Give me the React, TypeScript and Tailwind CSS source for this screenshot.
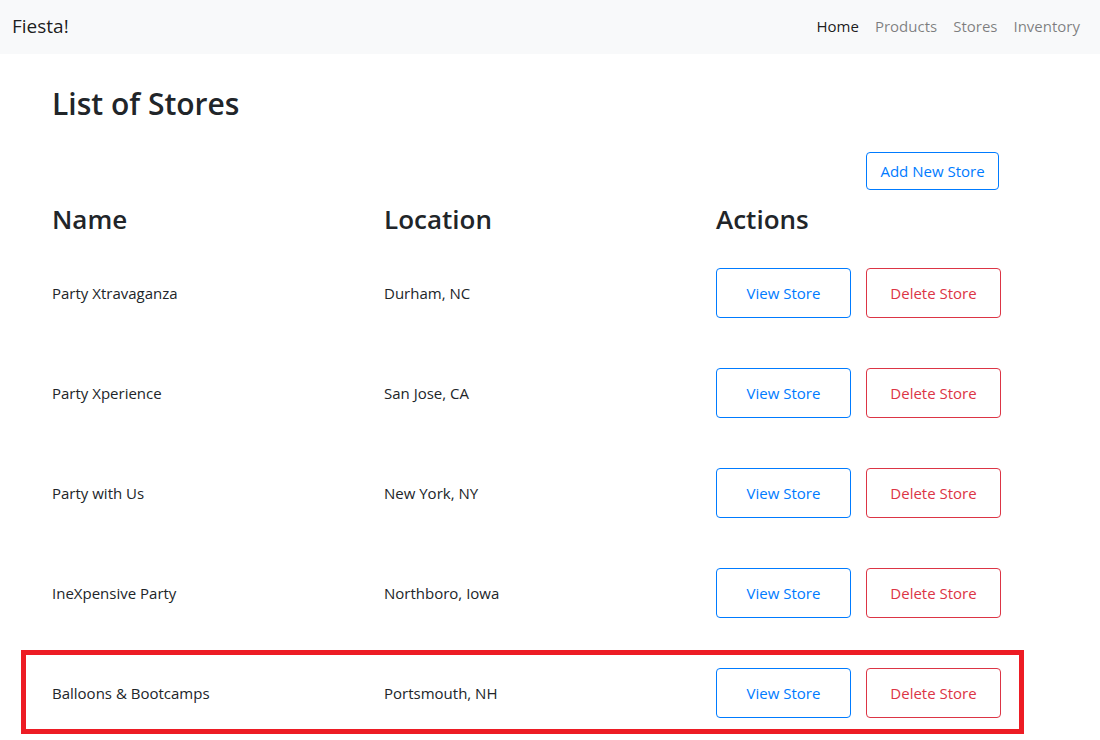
import React from "react";

const stores = [
  { name: "Party Xtravaganza", loc: "Durham, NC" },
  { name: "Party Xperience", loc: "San Jose, CA" },
  { name: "Party with Us", loc: "New York, NY" },
  { name: "IneXpensive Party", loc: "Northboro, Iowa" },
  { name: "Balloons & Bootcamps", loc: "Portsmouth, NH" },
];

export default function App() {
  return (
    <div className="min-h-[740px] bg-white text-[#212529] font-['Open_Sans',sans-serif]">
      <nav className="h-[54px] bg-[#f8f9fa] flex items-center justify-between pl-[12px] pr-[20px] pb-[1px]">
        <span className="text-[19px] text-[rgba(0,0,0,0.9)]">Fiesta!</span>
        <div className="flex gap-[16px] text-[15px]">
          <span className="text-[rgba(0,0,0,0.9)]">Home</span>
          <span className="text-[rgba(0,0,0,0.5)]">Products</span>
          <span className="text-[rgba(0,0,0,0.5)]">Stores</span>
          <span className="text-[rgba(0,0,0,0.5)]">Inventory</span>
        </div>
      </nav>
      <main className="px-[52px]">
        <h1 className="pt-[30px] text-[30px] font-semibold leading-[40px]">List of Stores</h1>
        <div className="flex justify-end pr-[49px] mt-[28px]">
          <button className="h-[38px] w-[133px] rounded-[4px] border border-[#007bff] text-[#007bff] text-[15px]">
            Add New Store
          </button>
        </div>
        <div className="grid grid-cols-3 h-[53px] pt-[6px] items-center text-[26px] font-semibold">
          <div>Name</div>
          <div>Location</div>
          <div>Actions</div>
        </div>
        {stores.map((s, i) => (
          <div key={i} className="relative grid grid-cols-3 h-[100px] items-center text-[15px]">
            <div>{s.name}</div>
            <div>{s.loc}</div>
            <div className="flex gap-[15px]">
              <button className="h-[50px] w-[135px] rounded-[4px] border border-[#007bff] text-[#007bff]">
                View Store
              </button>
              <button className="h-[50px] w-[135px] rounded-[4px] border border-[#dc3545] text-[#dc3545]">
                Delete Store
              </button>
            </div>
            {i === stores.length - 1 && (
              <div className="absolute top-[7px] left-[-31px] w-[1003px] h-[84px] border-[5px] border-[#ed1c24]" />
            )}
          </div>
        ))}
      </main>
    </div>
  );
}
